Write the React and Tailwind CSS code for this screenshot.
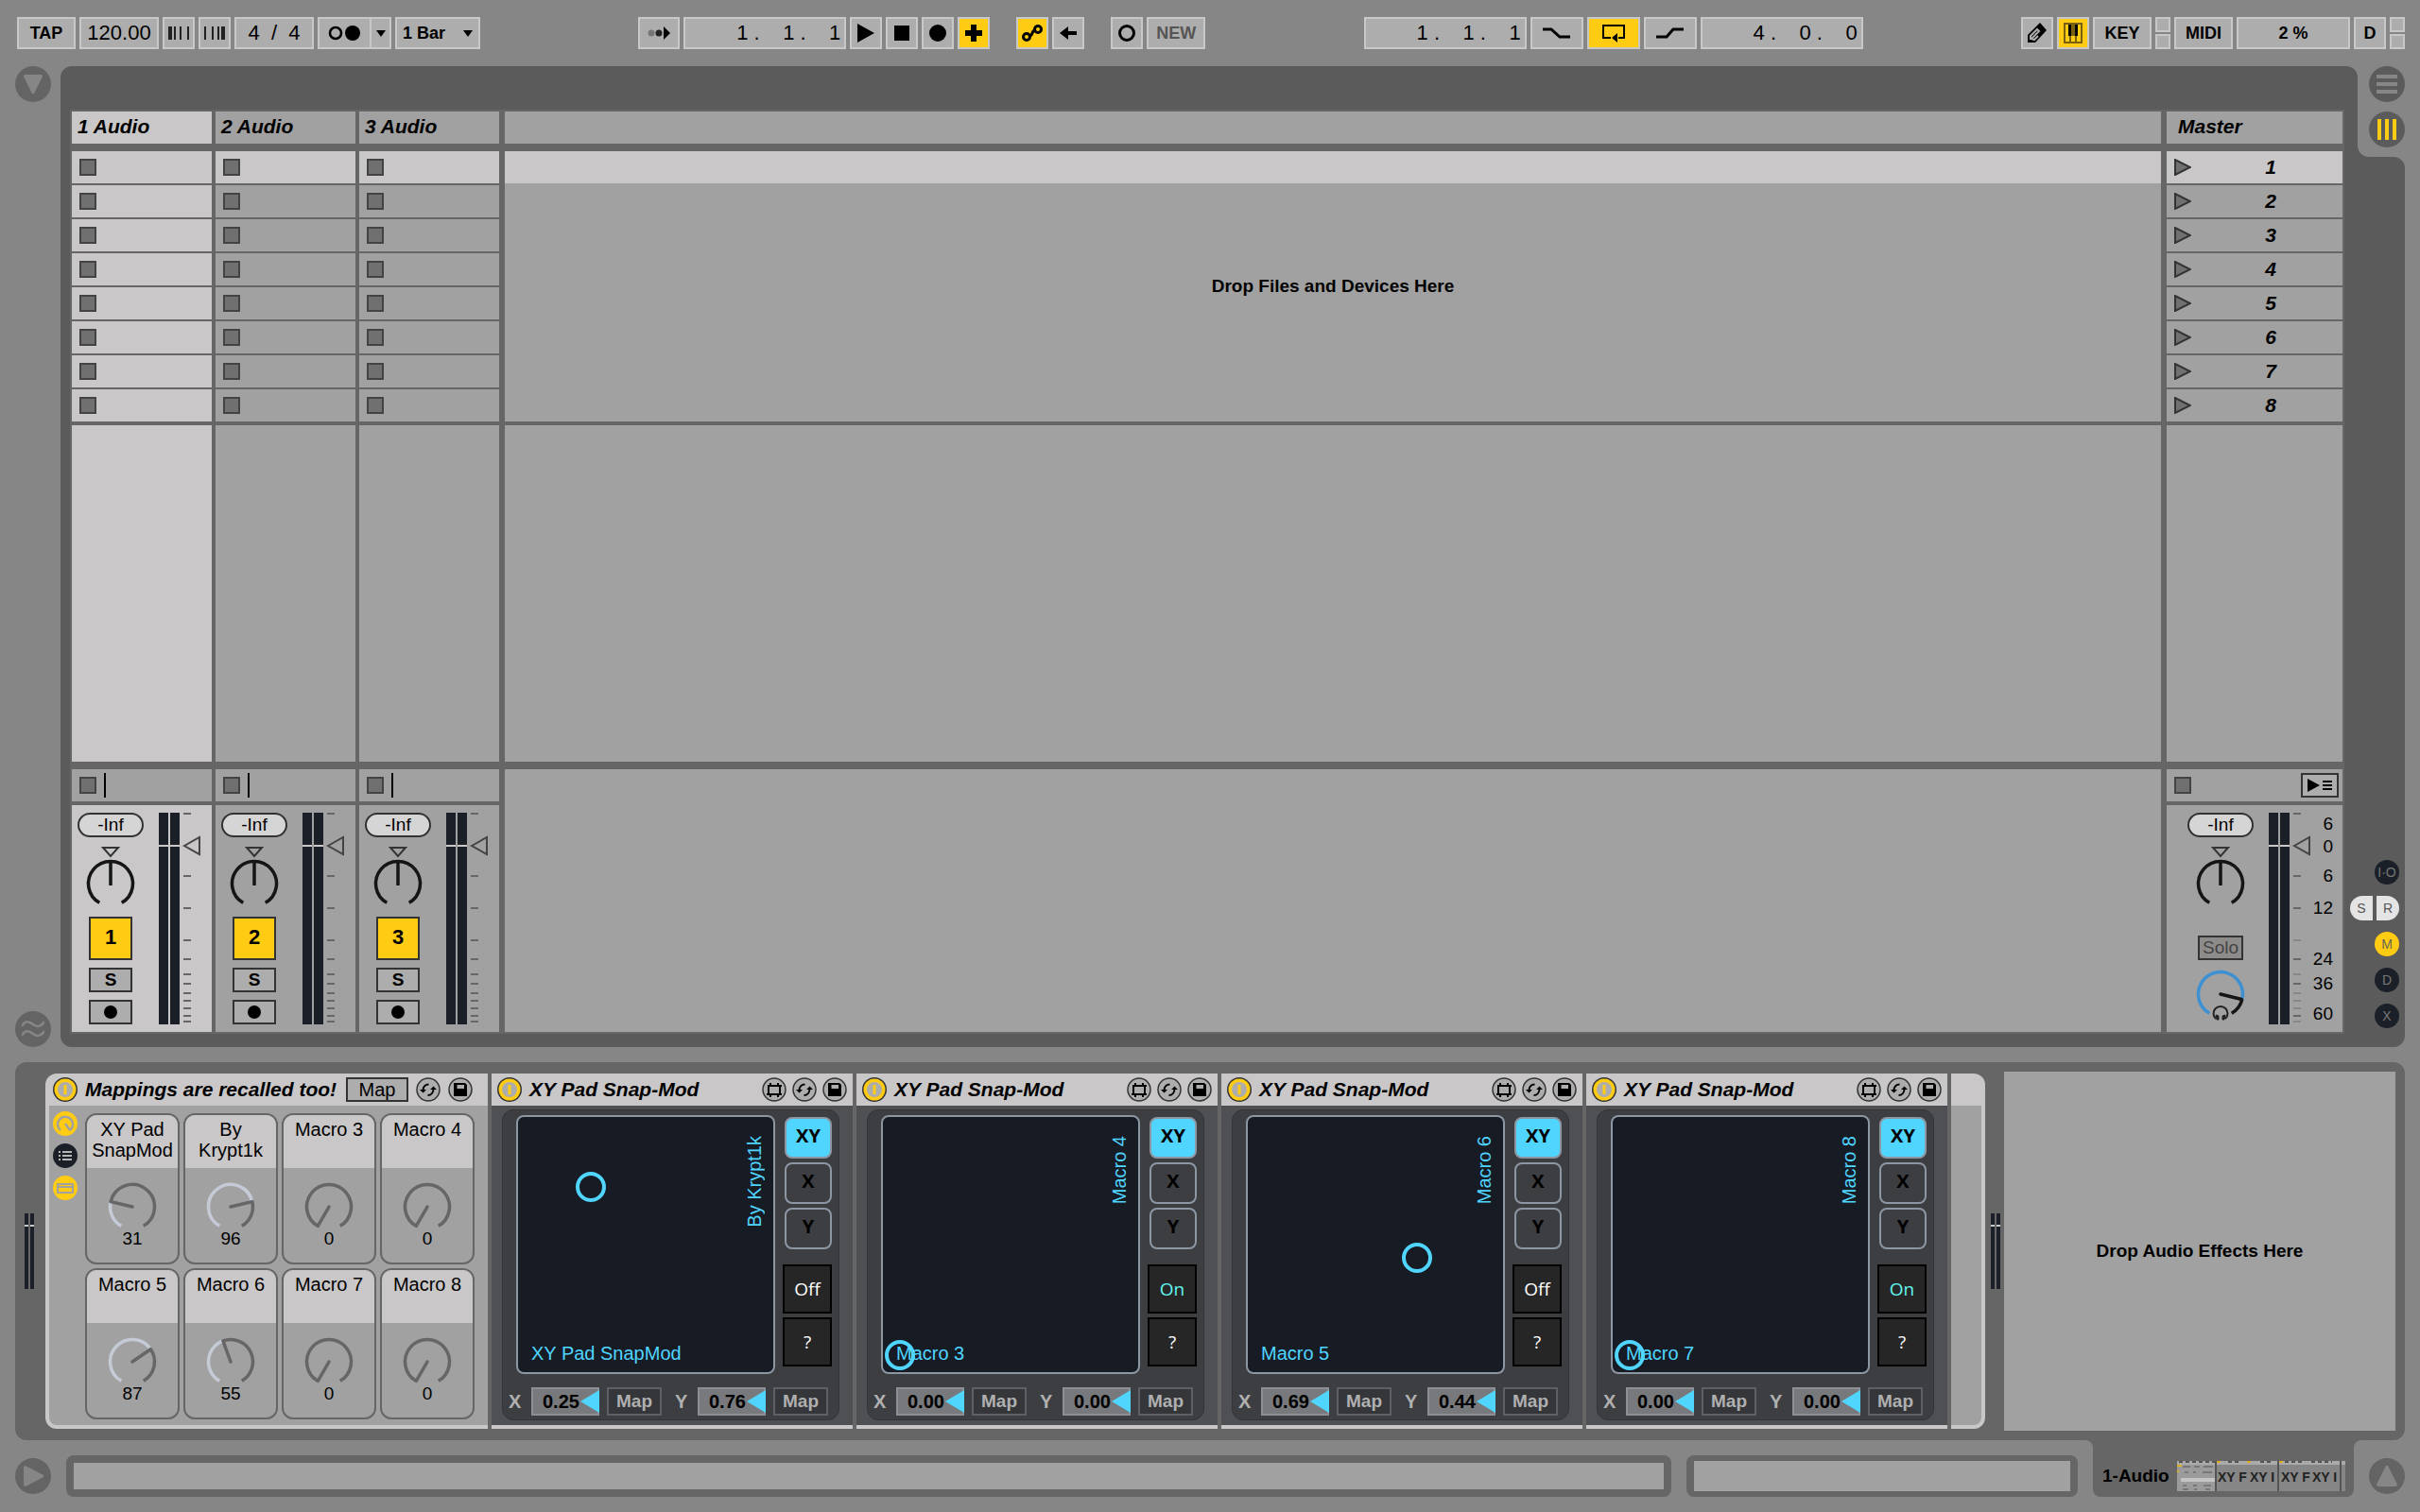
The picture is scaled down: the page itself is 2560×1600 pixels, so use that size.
import clsx from 'clsx';

const TRACKS = [
  { id: 1, name: '1 Audio', selected: true },
  { id: 2, name: '2 Audio' },
  { id: 3, name: '3 Audio' },
];

const SCENES = [1, 2, 3, 4, 5, 6, 7, 8];

const MACROS = [
  { name: 'XY Pad SnapMod', value: 31 },
  { name: 'By Krypt1k', value: 96 },
  { name: 'Macro 3', value: 0 },
  { name: 'Macro 4', value: 0 },
  { name: 'Macro 5', value: 87 },
  { name: 'Macro 6', value: 55 },
  { name: 'Macro 7', value: 0 },
  { name: 'Macro 8', value: 0 },
];

const PADS = [
  { id: 'a', xName: 'XY Pad SnapMod', yName: 'By Krypt1k', x: 0.25, y: 0.76, snap: false },
  { id: 'b', xName: 'Macro 3', yName: 'Macro 4', x: 0, y: 0, snap: true },
  { id: 'c', xName: 'Macro 5', yName: 'Macro 6', x: 0.69, y: 0.44, snap: false },
  { id: 'd', xName: 'Macro 7', yName: 'Macro 8', x: 0, y: 0, snap: true },
];

// meter scale, px from the top of the meter
const TICKS = [
  { y: 0, label: '6', at: 12 },
  { y: 66, label: '6', at: 67 },
  { y: 100, label: '12', at: 101 },
  { y: 134 },
  { y: 154, label: '24', at: 155 },
  { y: 170 },
  { y: 180, label: '36', at: 181 },
  { y: 190 },
  { y: 198 },
  { y: 206 },
  { y: 214, label: '60', at: 213 },
  { y: 220 },
];

// angle is in degrees clockwise from the top
function polar(cx, cy, r, deg) {
  const a = ((deg - 90) * Math.PI) / 180;
  return [cx + r * Math.cos(a), cy + r * Math.sin(a)];
}

function arc(cx, cy, r, from, to) {
  const [x1, y1] = polar(cx, cy, r, from);
  const [x2, y2] = polar(cx, cy, r, to);
  return `M${x1} ${y1}A${r} ${r} 0 ${to - from > 180 ? 1 : 0} 1 ${x2} ${y2}`;
}

/* ---------- transport bar ---------- */

function BarButton({ label, className, on, children }) {
  return (
    <button
      aria-label={label}
      className={clsx(
        'flex h-[34px] shrink-0 items-center justify-center border-2 border-[#c8c8c8] text-lg font-bold whitespace-nowrap',
        on ? 'bg-[#ffcb13]' : 'bg-[#adadad]',
        className || 'w-[34px]',
      )}
    >
      {children}
    </button>
  );
}

function BarField({ label, value, className }) {
  return (
    <input
      aria-label={label}
      defaultValue={value}
      className={clsx('h-[34px] shrink-0 border-2 border-[#c8c8c8] bg-[#adadad] text-[22px] outline-none', className)}
    />
  );
}

function Lamps() {
  return (
    <div className="flex w-4 shrink-0 flex-col gap-0.5">
      <span className="h-4 border-2 border-[#c8c8c8] bg-[#adadad]" />
      <span className="h-4 border-2 border-[#c8c8c8] bg-[#adadad]" />
    </div>
  );
}

function TransportBar() {
  return (
    <header className="flex justify-between py-[18px] pr-4 pl-[18px]">
      <div className="flex gap-1">
        <BarButton className="w-[62px]">TAP</BarButton>
        <BarField label="Tempo" value="120.00" className="w-[84px] text-center" />
        <BarButton label="Nudge down">
          <svg width="24" height="14" fill="#222"><path d="M1 0h4v14h-4zM7 0h2v14h-2zM13 0h2v14h-2zM21 0h2v14h-2z" /></svg>
        </BarButton>
        <BarButton label="Nudge up">
          <svg width="24" height="14" fill="#222"><path d="M1 0h2v14h-2zM9 0h2v14h-2zM15 0h2v14h-2zM19 0h4v14h-4z" /></svg>
        </BarButton>
        <BarField label="Time signature" value="4  /  4" className="w-[84px] text-center" />
        <div className="flex">
          <BarButton label="Metronome" className="w-[57px]">
            <svg width="36" height="16"><circle cx="8" cy="8" r="6" fill="none" stroke="#000" strokeWidth="2.5" /><circle cx="26" cy="8" r="8" /></svg>
          </BarButton>
          <BarButton label="Metronome settings" className="w-[21px] border-l-0">
            <svg width="10" height="8"><path d="M0 1h10L5 8z" /></svg>
          </BarButton>
        </div>
        <div className="relative">
          <select aria-label="Quantization" className="h-[34px] w-[90px] appearance-none border-2 border-[#c8c8c8] bg-[#adadad] pl-1.5 text-lg font-bold outline-none">
            <option>1 Bar</option>
          </select>
          <svg className="pointer-events-none absolute top-3.5 right-2" width="10" height="8"><path d="M0 0h10L5 7z" /></svg>
        </div>
      </div>

      <div className="flex gap-1">
        <BarButton label="Follow" className="w-11">
          <svg width="24" height="14"><circle cx="4" cy="7" r="3.5" fill="#777" /><circle cx="12" cy="7" r="3.5" fill="#222" /><path d="M17 0l7 7-7 7z" /></svg>
        </BarButton>
        <BarField label="Arrangement position" value="1 .    1 .    1" className="w-[172px] pr-1 text-right" />
        <BarButton label="Play"><svg width="20" height="20"><path d="M1 0l18 10L1 20z" /></svg></BarButton>
        <BarButton label="Stop"><svg width="16" height="16"><path d="M0 0h16v16H0z" /></svg></BarButton>
        <BarButton label="Record"><svg width="18" height="18"><circle cx="9" cy="9" r="9" /></svg></BarButton>
        <BarButton label="Overdub" on><svg width="18" height="18"><path d="M6 0h6v6h6v6h-6v6H6v-6H0V6h6z" /></svg></BarButton>
        <div className="ml-6 flex gap-1">
          <BarButton label="Automation arm" on>
            <svg width="24" height="20" fill="none" stroke="#000" strokeWidth="3"><circle cx="6" cy="14" r="3.5" /><circle cx="18" cy="6" r="3.5" /><path d="M9 13c4 0 2-6 6-6" /></svg>
          </BarButton>
          <BarButton label="Re-enable automation">
            <svg width="18" height="14"><path d="M0 7l9-7v5h9v4H9v5z" /></svg>
          </BarButton>
        </div>
        <div className="ml-6 flex gap-1">
          <BarButton label="Session record">
            <svg width="20" height="20"><circle cx="10" cy="10" r="7.5" fill="none" stroke="#000" strokeWidth="3" /></svg>
          </BarButton>
          <BarButton className="w-[62px] text-[#555]">NEW</BarButton>
        </div>
      </div>

      <div className="flex gap-1">
        <BarField label="Loop start" value="1 .    1 .    1" className="w-[172px] pr-1 text-right" />
        <BarButton label="Punch in" className="w-14">
          <svg width="30" height="12" fill="none" stroke="#000" strokeWidth="3"><path d="M0 2h9l9 8h11" /></svg>
        </BarButton>
        <BarButton label="Loop" on className="w-14">
          <svg width="26" height="22"><path d="M10 16H2V3h22v13h-6" fill="none" stroke="#000" strokeWidth="2" /><path d="M11 16l6-5v10z" /></svg>
        </BarButton>
        <BarButton label="Punch out" className="w-14">
          <svg width="30" height="12" fill="none" stroke="#000" strokeWidth="3"><path d="M0 10h11l7-8h11" /></svg>
        </BarButton>
        <BarField label="Loop length" value="4 .    0 .    0" className="w-[172px] pr-1 text-right" />
      </div>

      <div className="flex gap-1">
        <BarButton label="Draw">
          <svg width="22" height="22"><path d="M1 21v-8L14 0l7 8L9 21z" /><path d="M4 18v-4l7-7 2 2-8 8 3 1 4-4" stroke="#adadad" strokeWidth="2" fill="none" /></svg>
        </BarButton>
        <BarButton label="Computer MIDI keyboard" on>
          <svg width="20" height="22"><path d="M1 1h18v20H1zM7 13v8M13 13v8" fill="none" stroke="#7a6110" strokeWidth="2" /><path d="M8 2h4v12H8z" fill="#7a6110" /><path d="M5 2h3v12H5zM12 2h3v12h-3z" /></svg>
        </BarButton>
        <BarButton className="w-[62px]">KEY</BarButton>
        <Lamps />
        <BarButton className="w-[62px]">MIDI</BarButton>
        <BarButton className="w-[120px]">2 %</BarButton>
        <BarButton>D</BarButton>
        <Lamps />
      </div>
    </header>
  );
}

/* ---------- shared bits ---------- */

function RoundButton({ label, className, children }) {
  return (
    <button aria-label={label} className={clsx('flex size-[38px] shrink-0 items-center justify-center rounded-full', className || 'bg-[#646464]')}>
      {children}
    </button>
  );
}

function StopSquare({ label }) {
  return <button aria-label={label} className="size-[18px] shrink-0 border-2 border-[#434343] bg-[#707070]" />;
}

function IconButton({ label, children }) {
  return (
    <button aria-label={label} className="size-[26px] shrink-0">
      <svg width="26" height="26">
        <circle cx="13" cy="13" r="12" fill="#adadad" stroke="#333" strokeWidth="1.5" />
        {children}
      </svg>
    </button>
  );
}

function PowerButton() {
  return (
    <button aria-label="Device on" className="size-[26px] shrink-0">
      <svg width="26" height="26">
        <circle cx="13" cy="13" r="13" fill="#333" />
        <circle cx="13" cy="13" r="11.5" fill="#ffcb13" />
        <circle cx="13" cy="13" r="8" fill="#adadad" />
        <path d="M11.5 8h3v10h-3z" fill="#ffcb13" />
      </svg>
    </button>
  );
}

function SwapButton() {
  return (
    <IconButton label="Hot-swap preset">
      <path d="M7.500 14c0-4 2.500-6.500 6-6.500M18.500 12c0 4-2.500 7-6 7" fill="none" stroke="#000" strokeWidth="2" />
      <path d="M4 13h7l-3.500 3.500zM15 13h7l-3.500-3.500z" />
    </IconButton>
  );
}

function SaveButton() {
  return (
    <IconButton label="Save preset">
      <path d="M6 6h12l2 2v12H6z" />
      <path d="M9.500 8h7.500v4h-7.500z" fill="#adadad" />
    </IconButton>
  );
}

/* ---------- session view ---------- */

function PanKnob() {
  return (
    <svg className="mt-2" width="60" height="66" fill="none">
      <path d="M22 3h16l-8 9z" stroke="#333" strokeWidth="2" />
      <path d={arc(30, 41, 23.5, -150, 150)} stroke="#151515" strokeWidth="3.5" />
      <path d="M30 17v26" stroke="#151515" strokeWidth="3.5" />
    </svg>
  );
}

function CueKnob() {
  const [nx, ny] = polar(30, 28, 23, 104);
  return (
    <svg className="mt-2" width="60" height="60" fill="none">
      <path d={arc(30, 28, 23.5, -150, 104)} stroke="#3d91d3" strokeWidth="3.5" />
      <path d={arc(30, 28, 23.5, 104, 150)} stroke="#151515" strokeWidth="3.5" />
      <path d={`M30 28L${nx} ${ny}`} stroke="#151515" strokeWidth="3.5" strokeLinecap="round" />
      <path d="M25 54a7.5 7.5 0 1 1 10 0" stroke="#222" strokeWidth="2" />
      <path d="M25 50l3 1v4h-2zM35 50l-3 1v4h2z" fill="#222" stroke="#222" />
    </svg>
  );
}

function Meter({ master }) {
  return (
    <svg className="shrink-0" width={master ? 70 : 46} height="226">
      <path d="M0 0h10v34H0zM12 0h10v34H12zM0 36h10v188H0zM12 36h10v188H12z" fill="#1b2028" />
      <path d="M0 34h10v2H0zM12 34h10v2H12z" fill="#c9c9c9" />
      {TICKS.map((t) => (
        <rect key={t.y} x="26" y={t.y} width="8" height="2" fill={master && !t.label ? '#878787' : '#666'} />
      ))}
      <path d="M27 35l16-9v18z" fill="none" stroke="#444" strokeWidth="2" />
      {master && (
        <g fontSize="19" textAnchor="end" fill="#000">
          <text x="68" y="42">0</text>
          {TICKS.filter((t) => t.label).map((t) => (
            <text key={t.y} x="68" y={t.at + 6}>{t.label}</text>
          ))}
        </g>
      )}
    </svg>
  );
}

function Volume() {
  return (
    <input
      aria-label="Peak level"
      defaultValue="-Inf"
      className="h-[26px] w-[70px] shrink-0 rounded-full border-2 border-[#333] bg-[#d5d5d5] text-center text-[19px] outline-none"
    />
  );
}

function Track({ track }) {
  const tone = track.selected ? 'bg-[#c9c7c8]' : 'bg-[#a1a1a1]';
  return (
    <section className="flex w-[148px] shrink-0 flex-col">
      <h2 className={clsx('flex h-[34px] items-center pb-0.5 pl-1.5 text-[21px] font-bold italic', tone)}>{track.name}</h2>
      <div className="mt-2 flex flex-col gap-0.5">
        {SCENES.map((s) => (
          <div key={s} className={clsx('flex h-[34px] items-center pl-2', s === 1 ? 'bg-[#c9c7c8]' : tone)}>
            <StopSquare label={`Stop, track ${track.id} slot ${s}`} />
          </div>
        ))}
      </div>
      <div className={clsx('mt-1 flex-1', tone)} />
      <div className="mt-2 flex h-[34px] items-center gap-2 bg-[#a1a1a1] pl-2">
        <StopSquare label={`Stop track ${track.id}`} />
        <span className="h-[26px] w-0.5 bg-black" />
      </div>
      <div className={clsx('mt-1 flex h-60 gap-4 pt-2 pl-1.5', tone)}>
        <div className="flex w-[70px] shrink-0 flex-col items-center">
          <Volume />
          <PanKnob />
          <button className="mt-2.5 size-[46px] border-2 border-[#333] bg-[#ffcb13] pb-0.5 text-[22px] leading-6 font-bold">{track.id}</button>
          <button className="mt-2 flex h-[26px] w-[46px] items-center justify-center border-2 border-[#333] bg-[#adadad] text-[19px] font-bold">S</button>
          <button aria-label="Arm" className="mt-2 flex h-[26px] w-[46px] items-center justify-center border-2 border-[#333] bg-[#adadad]">
            <svg width="14" height="14"><circle cx="7" cy="7" r="7" /></svg>
          </button>
        </div>
        <Meter />
      </div>
    </section>
  );
}

function Master() {
  return (
    <section className="flex w-[186px] shrink-0 flex-col">
      <h2 className="flex h-[34px] items-center bg-[#a1a1a1] pb-0.5 pl-3 text-[21px] font-bold italic">Master</h2>
      <div className="mt-2 flex flex-col gap-0.5">
        {SCENES.map((s) => (
          <button key={s} className={clsx('flex h-[34px] items-center pl-2 text-[21px] font-bold italic', s === 1 ? 'bg-[#c9c7c8]' : 'bg-[#a1a1a1]')}>
            <svg width="18" height="18"><path d="M1 1v16l16-8z" fill="#707070" stroke="#333" strokeWidth="2" /></svg>
            <span className="flex-1 pl-2">{s}</span>
          </button>
        ))}
      </div>
      <div className="mt-1 flex-1 bg-[#a1a1a1]" />
      <div className="mt-2 flex h-[34px] items-center justify-between bg-[#a1a1a1] pr-1 pl-2">
        <StopSquare label="Stop all clips" />
        <button aria-label="Back to arrangement" className="flex h-[26px] w-10 items-center justify-center border-2 border-[#333] bg-[#adadad]">
          <svg width="28" height="14"><path d="M1 0l13 7-13 7zM17 2h10v2H17zM17 6h10v2H17zM17 10h10v2H17z" /></svg>
        </button>
      </div>
      <div className="mt-1 flex h-60 gap-4 bg-[#a1a1a1] pt-2 pl-[22px]">
        <div className="flex w-[70px] shrink-0 flex-col items-center">
          <Volume />
          <PanKnob />
          <button className="mt-[30px] flex h-[26px] w-12 items-center justify-center border-2 border-[#333] bg-[#8e8c8a] text-[19px] text-[#444]">Solo</button>
          <CueKnob />
        </div>
        <Meter master />
      </div>
    </section>
  );
}

function ViewToggle({ className, children }) {
  return (
    <button className={clsx('flex h-[26px] items-center justify-center text-sm', className || 'w-[26px] rounded-full bg-[#1b2028] text-[#777]')}>
      {children}
    </button>
  );
}

function Session() {
  return (
    <main className="flex flex-1 px-4">
      <div className="flex w-12 shrink-0 flex-col justify-between">
        <RoundButton label="Show browser">
          <svg width="22" height="22"><path d="M2 1h18l1 2-9 18h-2L1 3z" fill="#868686" /></svg>
        </RoundButton>
        <RoundButton label="Groove pool">
          <svg width="24" height="20" fill="none" stroke="#868686" strokeWidth="2.5"><path d="M0 7c4-7 8-5 12-2s8 3 12-3M0 17c4-7 8-5 12-2s8 3 12-3" /></svg>
        </RoundButton>
      </div>

      <div className="flex flex-1 rounded-l-xl rounded-tr-xl bg-[#5b5b5b] pt-[46px] pr-3.5 pb-3.5 pl-2.5">
        <div className="flex flex-1 gap-1.5 bg-[#666] p-0.5">
          <div className="flex gap-1">
            {TRACKS.map((t) => <Track key={t.id} track={t} />)}
          </div>
          <section className="flex flex-1 flex-col">
            <div className="h-[34px] bg-[#a1a1a1]" />
            <div className="mt-2 h-[34px] bg-[#c9c7c8]" />
            <div className="flex h-[252px] items-center justify-center bg-[#a1a1a1] pb-[34px] text-[19px] font-bold">
              Drop Files and Devices Here
            </div>
            <div className="mt-1 flex-1 bg-[#a1a1a1]" />
            <div className="mt-2 h-[278px] bg-[#a1a1a1]" />
          </section>
          <Master />
        </div>
      </div>

      <aside className="flex w-[50px] shrink-0 flex-col">
        <div className="bg-[#5b5b5b]">
          <div className="flex h-24 flex-col items-end gap-2.5 rounded-bl-xl bg-[#868686]">
            <RoundButton label="Arrangement view" className="bg-[#5b5b5b]">
              <svg width="22" height="20" fill="#868686"><path d="M0 0h22v4H0zM0 8h22v4H0zM0 16h22v4H0z" /></svg>
            </RoundButton>
            <RoundButton label="Session view" className="bg-[#5b5b5b]">
              <svg width="20" height="22" fill="#ffcb13"><path d="M0 0h4v22H0zM8 0h4v22H8zM16 0h4v22h-4z" /></svg>
            </RoundButton>
          </div>
        </div>
        <div className="flex flex-1 flex-col items-end justify-end gap-3 rounded-r-xl bg-[#5b5b5b] pr-1.5 pb-5">
          <ViewToggle>I·O</ViewToggle>
          <div className="flex gap-1">
            <ViewToggle className="w-6 rounded-l-full bg-[#e4e4e4] text-[#555]">S</ViewToggle>
            <ViewToggle className="w-6 rounded-r-full bg-[#e4e4e4] text-[#555]">R</ViewToggle>
          </div>
          <ViewToggle className="w-[26px] rounded-full bg-[#ffcb13] text-[#665]">M</ViewToggle>
          <ViewToggle>D</ViewToggle>
          <ViewToggle>X</ViewToggle>
        </div>
      </aside>
    </main>
  );
}

/* ---------- device view ---------- */

function ChainMeter() {
  return (
    <svg className="shrink-0" width="10" height="80">
      <path d="M0 0h4v80H0zM6 0h4v80H6z" fill="#1b2028" />
      <path d="M0 12h4v2H0zM6 12h4v2H6z" fill="#c9c9c9" />
    </svg>
  );
}

function MacroKnob({ value }) {
  const angle = -150 + (value / 127) * 300;
  const [nx, ny] = polar(28, 27, 23.5, angle);
  return (
    <svg width="56" height="54" fill="none" strokeWidth="3.5">
      <path d={arc(28, 27, 23.5, angle, 150)} stroke="#666" />
      {value > 0 && <path d={arc(28, 27, 23.5, -150, angle)} stroke="#c5cbd6" />}
      <path d={`M28 27L${nx} ${ny}`} stroke="#666" strokeLinecap="round" />
    </svg>
  );
}

function MacroRack() {
  return (
    <section className="flex w-[468px] shrink-0 flex-col overflow-hidden rounded-l-xl bg-[#c9c7c8] pb-1">
      <div className="flex h-[34px] items-center pl-2">
        <PowerButton />
        <h2 className="w-[284px] shrink-0 pl-2 text-[21px] font-bold italic whitespace-nowrap">Mappings are recalled too!</h2>
        <button className="mr-2 flex h-[26px] w-[66px] items-center justify-center border-2 border-[#333] bg-[#adadad] text-[20px]">Map</button>
        <div className="flex gap-2">
          <SwapButton />
          <SaveButton />
        </div>
      </div>
      <div className="ml-1 flex flex-1 gap-2 rounded-bl-lg bg-[#a1a1a1] pl-1">
        <div className="flex flex-col gap-2 pt-1.5">
          <button aria-label="Show macros">
            <svg width="26" height="26"><circle cx="13" cy="13" r="13" fill="#ffcb13" /><path d="M8 20a8 8 0 1 1 10 0M18 20l-5-7" fill="none" stroke="#a1a1a1" strokeWidth="2.500" /></svg>
          </button>
          <button aria-label="Show chain list">
            <svg width="26" height="26"><circle cx="13" cy="13" r="13" fill="#1b2028" /><path d="M6 8h2v2H6zM6 12h2v2H6zM6 16h2v2H6zM10 8h10v2H10zM10 12h10v2H10zM10 16h10v2H10z" fill="#b5b5b5" /></svg>
          </button>
          <button aria-label="Show devices">
            <svg width="26" height="26"><circle cx="13" cy="13" r="13" fill="#ffcb13" /><path d="M5 9h16v9H5zM5 12h16" fill="none" stroke="#a1a1a1" strokeWidth="2" strokeLinejoin="round" /></svg>
          </button>
        </div>
        <div className="grid grid-cols-[repeat(4,100px)] content-start gap-1 pt-2">
          {MACROS.map((m) => (
            <div key={m.name} className="flex h-40 flex-col items-center overflow-hidden rounded-xl border-2 border-[#666]">
              <div className="h-14 w-full bg-[#c9c7c8] pt-1 text-center text-[20px] leading-[22px]">
                {m.name === 'XY Pad SnapMod' ? <>XY Pad<br />SnapMod</> : m.name === 'By Krypt1k' ? <>By<br />Krypt1k</> : m.name}
              </div>
              <div className="mt-3.5 flex flex-col items-center text-[19px] leading-[14px]">
                <MacroKnob value={m.value} />
                <span>{m.value}</span>
              </div>
            </div>
          ))}
        </div>
      </div>
    </section>
  );
}

function AxisValue({ axis, value, id }) {
  return (
    <div className="flex items-center">
      <label htmlFor={id} className="w-6 text-[20px] font-bold text-[#b0b0b0]">{axis}</label>
      <div className="relative">
        <input id={id} defaultValue={value.toFixed(2)} className="h-[30px] w-[72px] border-2 border-[#8d8f92] bg-[#77797c] pl-2.5 text-[20px] font-bold outline-none" />
        <svg className="absolute top-[3px] right-0" width="20" height="24"><path d="M20 0v24L0 12z" fill="#50d5ff" /></svg>
      </div>
      <button className="ml-2 flex h-[30px] w-[58px] items-center justify-center border-2 border-[#5e6063] bg-[#35363a] text-[19px] font-bold text-[#b0b0b0]">Map</button>
    </div>
  );
}

function ModeButton({ on, children }) {
  return (
    <button className={clsx("h-11 w-[50px] rounded-lg border-2 border-[#8d97a3] pb-1 font-['Open_Sans',sans-serif] text-[20px] leading-6 font-bold", on && 'bg-[#50d5ff]')}>
      {children}
    </button>
  );
}

function XYPad({ pad }) {
  const handle = { left: 2 + pad.x * 234, top: 236 - pad.y * 234 };
  return (
    <section className="flex w-[382px] shrink-0 flex-col bg-[#c9c7c8] pb-1">
      <div className="flex h-[34px] items-center gap-1.5 px-1.5">
        <PowerButton />
        <h2 className="flex-1 pl-0.5 text-[21px] font-bold italic whitespace-nowrap">XY Pad Snap-Mod</h2>
        <IconButton label="Edit device">
          <path d="M7 9h12v9H7zM9 6v3M17 6v3M9 18v3M17 18v3M6 9h1M19 9h2M5 18h2M19 18h2" fill="none" stroke="#000" strokeWidth="2" />
        </IconButton>
        <SwapButton />
        <SaveButton />
      </div>
      <div className="flex-1 bg-[#4e5053] px-[11px] pt-1 pb-[5px]">
        <div className="mr-[3px] flex h-full flex-col justify-between rounded-xl border border-[#333438] bg-[#3d3e42] pt-[5px] pr-[7px] pb-1">
          <div className="flex justify-between pl-3.5">
            <div className="relative size-[274px] overflow-hidden rounded-lg border-2 border-[#8d97a3] bg-[#171b23] text-[20px] leading-6 text-[#50d5ff]">
              <svg className="absolute" style={handle} width="32" height="32"><circle cx="16" cy="16" r="14" fill="none" stroke="#50d5ff" strokeWidth="4" /></svg>
              <span className="absolute bottom-2 left-3.5">{pad.xName}</span>
              <span className="absolute top-5 right-2 rotate-180 [writing-mode:vertical-rl]">{pad.yName}</span>
            </div>
            <div className="flex flex-col items-end gap-1 pt-0.5">
              <ModeButton on>XY</ModeButton>
              <ModeButton>X</ModeButton>
              <ModeButton>Y</ModeButton>
              <button className={clsx("mt-3 size-[52px] border-2 border-black bg-[#262626] font-['Open_Sans',sans-serif] text-[19px]", pad.snap ? 'text-[#63f5ef]' : 'text-white')}>
                {pad.snap ? 'On' : 'Off'}
              </button>
              <button className="size-[52px] border-2 border-black bg-[#262626] font-['Open_Sans',sans-serif] text-[19px] text-white">?</button>
            </div>
          </div>
          <div className="flex justify-between pr-1 pl-1.5">
            <AxisValue axis="X" value={pad.x} id={`${pad.id}-x`} />
            <AxisValue axis="Y" value={pad.y} id={`${pad.id}-y`} />
          </div>
        </div>
      </div>
    </section>
  );
}

function DeviceView() {
  return (
    <section className="mx-4 mt-4 flex h-[400px] items-center rounded-xl bg-[#666] px-2.5">
      <ChainMeter />
      <div className="ml-3 flex h-[376px] gap-1">
        <MacroRack />
        {PADS.map((p) => <XYPad key={p.id} pad={p} />)}
        <div className="w-9 overflow-hidden rounded-r-xl bg-[#c9c7c8] pt-[34px] pr-1 pb-1">
          <div className="h-full rounded-br-lg bg-[#a1a1a1]" />
        </div>
      </div>
      <div className="ml-1.5 flex"><ChainMeter /></div>
      <div className="ml-1 flex h-[380px] flex-1 items-center justify-center bg-[#a1a1a1] text-[19px] font-bold">
        Drop Audio Effects Here
      </div>
    </section>
  );
}

/* ---------- status bar ---------- */

function ChainThumbnail() {
  return (
    <svg className="ml-2" width="178" height="32">
      <path d="M0 0h178v32H0z" fill="#868686" />
      <path d="M0 0h178v4H0z" fill="#aaa" />
      <path d="M0 4h42v28H0z" fill="#9b9b9b" />
      <path d="M4 18h36v4H4z" fill="#c4c4c4" />
      <path d="M2 1h40M54 1h14M88 1h14M114 1h18M142 1h22" stroke="#555" strokeWidth="2" strokeDasharray="4 3" />
      <path d="M6 6h8M18 6h6M28 6h10M8 12h4M17 12h3M27 12h10M6 26h4M17 26h4M28 26h8M6 30h6M18 30h3M30 30h5" stroke="#777" strokeWidth="2" />
      <path d="M0 5h5M0 11h2M42 1h4M74 1h4M108 1h4" stroke="#e0b020" strokeWidth="2" />
      <path d="M41 0v32M107 0v32M173 0v32" stroke="#555" strokeWidth="2" />
      <g fontSize="14" fontWeight="bold" fill="#222">
        <text x="43" y="22">XY F</text>
        <text x="77" y="22">XY I</text>
        <text x="110" y="22">XY F</text>
        <text x="143" y="22">XY I</text>
      </g>
    </svg>
  );
}

function StatusBar() {
  return (
    <footer className="flex h-[76px] gap-2 px-4">
      <div className="flex flex-1 items-center gap-4">
        <RoundButton label="Show info view">
          <svg width="24" height="22"><path d="M2 1l2-1 19 10v2L4 22l-2-1z" fill="#868686" /></svg>
        </RoundButton>
        <div className="h-11 flex-1 rounded-lg border-8 border-[#666] bg-[#a1a1a1]" />
        <div className="h-11 w-[414px] rounded-lg border-x-8 border-y-6 border-[#666] bg-[#a1a1a1]" />
      </div>
      <div className="flex">
        <div className="h-2 w-2 bg-[#666]"><div className="size-2 rounded-tr-lg bg-[#868686]" /></div>
        <button className="mb-4 flex w-[276px] items-center rounded-b-lg bg-[#666] pt-4 pl-2.5 text-[19px] font-bold">
          1-Audio
          <ChainThumbnail />
        </button>
        <div className="h-2 w-2 bg-[#666]"><div className="size-2 rounded-tl-lg bg-[#868686]" /></div>
        <div className="flex items-center pl-2">
          <RoundButton label="Show device view">
            <svg width="24" height="24"><path d="M11 1h2l10 20-1 2H2l-1-2z" fill="#868686" /></svg>
          </RoundButton>
        </div>
      </div>
    </footer>
  );
}

export default function App() {
  return (
    <div className="flex min-h-screen flex-col bg-[#868686] font-['Liberation_Sans',Arial,sans-serif] text-black">
      <TransportBar />
      <Session />
      <DeviceView />
      <StatusBar />
    </div>
  );
}
